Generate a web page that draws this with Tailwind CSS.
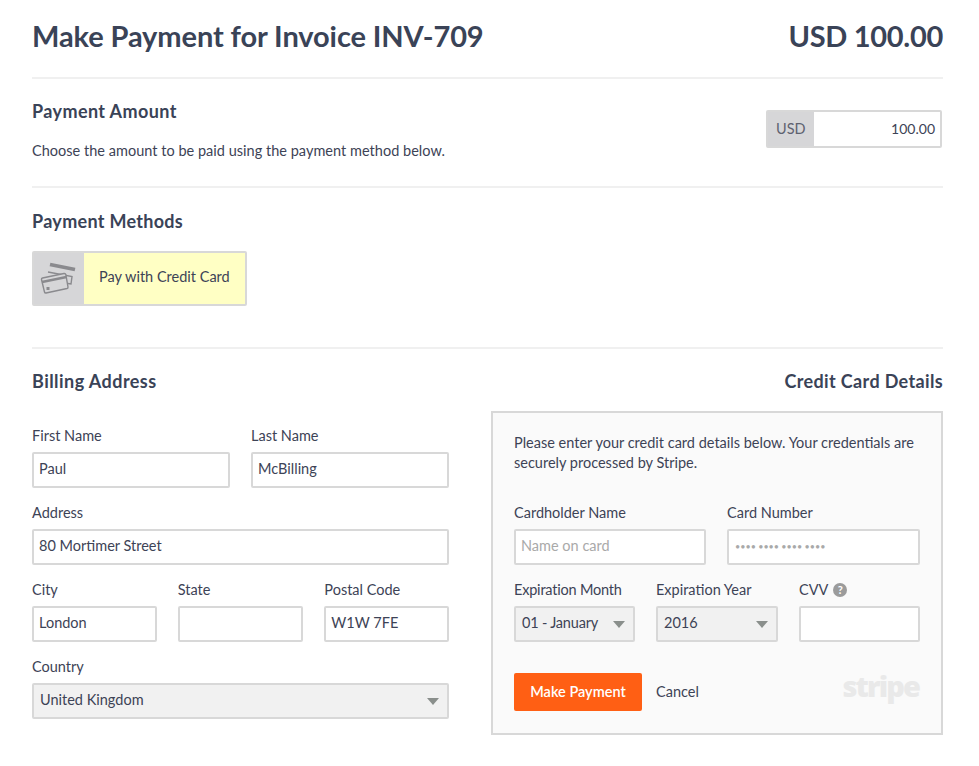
<!DOCTYPE html>
<html><head><meta charset="utf-8"><script src="https://cdn.jsdelivr.net/npm/@tailwindcss/browser@4"></script></head>
<body class="bg-white">
<div class="w-[979px] h-[766px] overflow-hidden pl-[32px] pr-[36px] font-['Lato','Liberation_Sans',sans-serif] text-[#3d4356] text-[14.5px]">
  <header class="h-[79px] border-b-2 border-[#f0f0f0] flex justify-between items-start pt-[16px] text-[#3a4357]">
    <h1 class="text-[29px] leading-[40px] font-bold tracking-[-0.1px]">Make Payment for Invoice INV-709</h1>
    <div class="text-[29px] leading-[40px] font-bold tracking-[-0.3px]">USD 100.00</div>
  </header>
  <section class="h-[109px] border-b-2 border-[#f0f0f0] flex justify-between">
    <div class="pt-[20px]">
      <h2 class="text-[18px] leading-[24px] font-bold text-[#3a4357] tracking-[0.4px]">Payment Amount</h2>
      <p class="mt-[18px] leading-[20px] tracking-[0.02px]">Choose the amount to be paid using the payment method below.</p>
    </div>
    <div class="mt-[31px] w-[176px] h-[38px] border-2 border-[#d8d8d8] rounded-[2px] flex mr-[1px]">
      <div class="w-[46px] bg-[#d6d6d8] flex items-center pl-[8px] text-[#5e6270] pb-[1px]">USD</div>
      <div class="flex-1 bg-white flex items-center justify-end pr-[5px] text-[14px] pb-[2px]">100.00</div>
    </div>
  </section>
  <section class="h-[161px] border-b-2 border-[#f0f0f0]">
    <h2 class="pt-[21px] text-[18px] leading-[24px] font-bold text-[#3a4357] tracking-[0.3px]">Payment Methods</h2>
    <div class="mt-[18px] w-[215px] h-[55px] border-2 border-[#d8d8d8] rounded-[2px] flex">
      <div class="w-[50px] bg-[#d6d6d8] flex items-center justify-center">
        <svg width="40" height="36" viewBox="0 0 40 36" fill="none" stroke="#8a8a8e" stroke-width="1.4">
          <path d="M11 3.500 L36 8.500" stroke-width="3.500"/>
          <path d="M9 11 L33 15.500 L32 23 L29 22.500"/>
          <path d="M3.500 17 L25 12.500 Q26.500 12.300 26.800 13.500 L29 26 Q29.200 27.200 28 27.500 L7 32 Q5.800 32.200 5.500 31 L2.500 18.500 Q2.300 17.300 3.500 17 Z" fill="#d6d6d8"/>
          <path d="M3 21 L27.500 16" stroke-width="2.500"/>
          <rect x="7.500" y="26" width="3" height="3" fill="#8a8a8e" stroke="none"/>
        </svg>
      </div>
      <div class="flex-1 bg-[#ffffc4] flex items-center pl-[15px] pb-[3px]">Pay with Credit Card</div>
    </div>
  </section>
  <div class="flex justify-between pt-[20px]">
    <h2 class="text-[18px] leading-[24px] font-bold text-[#3a4357] tracking-[0.45px]">Billing Address</h2>
    <h2 class="text-[18px] leading-[24px] font-bold text-[#3a4357] tracking-[0.35px]">Credit Card Details</h2>
  </div>
  <div class="flex justify-between">
    <form class="w-[417px] pt-[33px]">
      <div class="flex gap-[21px]">
        <label class="block w-[198px]"><span class="block h-[26px] leading-[20px]">First Name</span><span class="flex items-center h-[36px] border-2 border-[#d8d8d8] rounded-[2px] px-[5px] pb-[2px]">Paul</span></label>
        <label class="block w-[198px]"><span class="block h-[26px] leading-[20px]">Last Name</span><span class="flex items-center h-[36px] border-2 border-[#d8d8d8] rounded-[2px] px-[5px] pb-[2px]">McBilling</span></label>
      </div>
      <label class="block mt-[15px]"><span class="block h-[26px] leading-[20px]">Address</span><span class="flex items-center h-[36px] border-2 border-[#d8d8d8] rounded-[2px] px-[5px] pb-[2px]">80 Mortimer Street</span></label>
      <div class="flex gap-[21px] mt-[15px]">
        <label class="block w-[125px]"><span class="block h-[26px] leading-[20px]">City</span><span class="flex items-center h-[36px] border-2 border-[#d8d8d8] rounded-[2px] px-[5px] pb-[2px]">London</span></label>
        <label class="block w-[126px]"><span class="block h-[26px] leading-[20px]">State</span><span class="block h-[36px] border-2 border-[#d8d8d8] rounded-[2px]"></span></label>
        <label class="block w-[125px]"><span class="block h-[26px] leading-[20px]">Postal Code</span><span class="flex items-center h-[36px] border-2 border-[#d8d8d8] rounded-[2px] px-[5px] pb-[2px]">W1W 7FE</span></label>
      </div>
      <label class="block mt-[15px]"><span class="block h-[26px] leading-[20px]">Country</span>
        <span class="flex items-center justify-between h-[36px] border-2 border-[#d8d8d8] rounded-[2px] bg-[#f1f1f1] pl-[6px] pr-[8px]"><span class="-mt-[2px]">United Kingdom</span><svg width="12" height="7" viewBox="0 0 12 7"><path d="M0 0H12L6 7Z" fill="#8a8f8c"/></svg></span>
      </label>
    </form>
    <div class="w-[452px] h-[324px] mt-[18px] border-2 border-[#d8d8d8] bg-[#fafafa] pl-[21px] pr-[21px] pt-[20px]">
      <p class="leading-[20px]">Please enter your credit card details below. Your credentials are securely processed by Stripe.</p>
      <div class="flex gap-[21px] mt-[30px]">
        <label class="block w-[192px]"><span class="block h-[26px] leading-[20px]">Cardholder Name</span><span class="flex items-center h-[36px] border-2 border-[#d8d8d8] rounded-[2px] bg-white px-[5px] text-[#a9a9a9] pb-[2px]">Name on card</span></label>
        <label class="block w-[193px]"><span class="block h-[26px] leading-[20px]">Card Number</span><span class="flex items-center h-[36px] border-2 border-[#d8d8d8] rounded-[2px] bg-white px-[6px] text-[#a9a9a9] text-[9px]">•••• •••• •••• ••••</span></label>
      </div>
      <div class="flex gap-[21px] mt-[15px]">
        <label class="block w-[121px]"><span class="block h-[26px] leading-[20px] tracking-[-0.2px] whitespace-nowrap">Expiration Month</span>
          <span class="flex items-center justify-between h-[36px] border-2 border-[#d8d8d8] rounded-[2px] bg-[#f1f1f1] pl-[6px] pr-[8px]"><span class="tracking-[-0.2px] -mt-[2px]">01 - January</span><svg width="12" height="7" viewBox="0 0 12 7"><path d="M0 0H12L6 7Z" fill="#8a8f8c"/></svg></span></label>
        <label class="block w-[122px]"><span class="block h-[26px] leading-[20px]">Expiration Year</span>
          <span class="flex items-center justify-between h-[36px] border-2 border-[#d8d8d8] rounded-[2px] bg-[#f1f1f1] pl-[6px] pr-[8px]"><span class="-mt-[2px]">2016</span><svg width="12" height="7" viewBox="0 0 12 7"><path d="M0 0H12L6 7Z" fill="#8a8f8c"/></svg></span></label>
        <label class="block w-[121px]"><span class="flex items-start gap-[5px] h-[26px] leading-[20px]">CVV<span class="mt-[3px] w-[14px] h-[14px] rounded-full bg-[#9b9b9b] text-white text-[11px] leading-[14px] font-bold text-center">?</span></span><span class="block h-[36px] border-2 border-[#d8d8d8] rounded-[2px] bg-white"></span></label>
      </div>
      <div class="flex items-center mt-[31px] h-[38px]">
        <button class="w-[128px] h-[38px] bg-[#ff5f14] rounded-[2px] text-white font-semibold pb-[1px]">Make Payment</button>
        <span class="ml-[14px] -mt-[1px]">Cancel</span>
        <span class="ml-auto mr-[1px] font-['Open_Sans',sans-serif] text-[29px] leading-[30px] font-extrabold text-[#e9e9e9] tracking-[-1.9px] -mt-[12px]">stripe</span>
      </div>
    </div>
  </div>
</div>
</body></html>
